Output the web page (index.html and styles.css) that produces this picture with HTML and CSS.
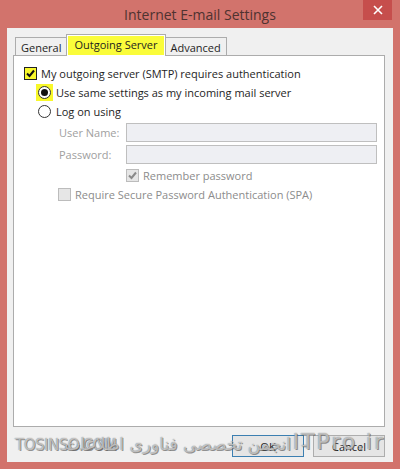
FILE: index.html
```html
<!DOCTYPE html>
<html lang="en">
<head>
  <meta charset="UTF-8">
  <title>Internet E-mail Settings</title>
  <link rel="stylesheet" href="styles.css">
</head>
<body>
  <div class="window">
    <div class="titlebar">
      <span class="title">Internet E-mail Settings</span>
      <button class="close" aria-label="Close">
        <svg width="10" height="10" viewBox="0 0 10 10"><path d="M1 1L9 9M9 1L1 9" stroke="#fff" stroke-width="1.6"/></svg>
      </button>
    </div>

    <div class="client">
      <div class="tabs">
        <div class="tab">General</div>
        <div class="tab active"><span class="mark">Outgoing Server</span></div>
        <div class="tab">Advanced</div>
      </div>

      <div class="panel">
        <div class="row">
          <span class="check marked">
            <svg width="11" height="11" viewBox="0 0 11 11"><path d="M2 5.5L4.5 8L9 2.5" fill="none" stroke="#111" stroke-width="2"/></svg>
          </span>
          <span>My outgoing server (SMTP) requires authentication</span>
        </div>
        <div class="row indent1">
          <span class="radio-wrap marked"><span class="radio on"></span></span>
          <span>Use same settings as my incoming mail server</span>
        </div>
        <div class="row indent1 last">
          <span class="radio-wrap"><span class="radio"></span></span>
          <span>Log on using</span>
        </div>

        <div class="field">
          <label>User Name:</label>
          <span class="input"></span>
        </div>
        <div class="field">
          <label>Password:</label>
          <span class="input"></span>
        </div>

        <div class="row disabled indent3">
          <span class="check dim">
            <svg width="11" height="11" viewBox="0 0 11 11"><path d="M2 5.5L4.5 8L9 2.5" fill="none" stroke="#8a8a8a" stroke-width="2"/></svg>
          </span>
          <span>Remember password</span>
        </div>
        <div class="row disabled indent2">
          <span class="check dim"></span>
          <span>Require Secure Password Authentication (SPA)</span>
        </div>
      </div>

      <div class="footer">
        <button class="btn default">OK</button>
        <button class="btn">Cancel</button>
      </div>

      <div class="watermark">
        <span class="wm-latin">TOSINSO.COM</span>
        <span class="wm-fa" dir="rtl">انجمن تخصصی فناوری اطلاعات</span>
        <span class="wm-dash">-</span>
        <span class="wm-site">ITPro.ir</span>
      </div>
    </div>
  </div>
</body>
</html>
```

FILE: styles.css
```css
html, body {
  margin: 0;
  padding: 0;
}
body {
  width: 400px;
  height: 469px;
  background-color: #d2736c;
  font-family: 'Open Sans', 'Noto Sans', sans-serif;
  font-size: 11px;
  color: #1e1e1e;
  overflow: hidden;
}
.window {
  height: 469px;
  padding: 0 7px 7px 7px;
  box-sizing: border-box;
  display: flex;
  flex-direction: column;
}
.titlebar {
  height: 28px;
  position: relative;
  display: flex;
  align-items: center;
  justify-content: center;
}
.title {
  font-size: 14px;
  color: #4e3230;
  margin-top: 1px;
}
.close {
  position: absolute;
  right: 1px;
  top: 0;
  width: 29px;
  height: 20px;
  border: 0;
  padding: 0;
  background-color: #c64e4c;
  display: flex;
  align-items: center;
  justify-content: center;
}
.client {
  flex: 1;
  background-color: #f0f0f0;
  position: relative;
  padding: 6px 8px 0 6px;
  display: flex;
  flex-direction: column;
}

/* tabs */
.tabs {
  display: flex;
  align-items: flex-end;
  height: 21px;
  padding-left: 2px;
  position: relative;
  z-index: 1;
}
.tab {
  height: 17px;
  padding: 0 5px;
  border: 1px solid #acacac;
  border-bottom: 0;
  background-color: #f0f0f0;
  line-height: 19px;
}
.tab + .tab {
  margin-left: -1px;
}
.tab.active {
  height: 21px;
  background-color: #fff;
  padding: 0 1px;
  margin-bottom: -1px;
}
.tab.active .mark {
  display: block;
  height: 19px;
  margin-top: 1px;
  padding: 0 6px;
  background-color: #fafc3a;
  line-height: 17px;
}

/* panel */
.panel {
  height: 372px;
  border: 1px solid #acacac;
  background-color: #fff;
  padding: 8px 0 0 10px;
  box-sizing: border-box;
}
.row {
  display: flex;
  align-items: center;
  height: 18px;
  gap: 4px;
  margin-bottom: 1px;
}
.row.last {
  margin-bottom: 0;
}
.indent1 {
  padding-left: 14px;
}
.indent2 {
  padding-left: 34px;
}
.indent3 {
  padding-left: 102px;
}
.check {
  width: 11px;
  height: 11px;
  border: 1px solid #333;
  background-color: #fff;
  display: flex;
  align-items: center;
  justify-content: center;
}
.check.marked {
  background-color: #f8f82a;
  border-color: #222;
}
.check.dim {
  border-color: #bcbcbc;
  background-color: #e6e6e6;
}
.radio-wrap {
  width: 17px;
  height: 17px;
  display: flex;
  align-items: center;
  justify-content: center;
  margin-left: -2px;
  margin-right: -1px;
}
.radio-wrap.marked {
  background-color: #f8f82a;
}
.radio {
  width: 11px;
  height: 11px;
  border: 1px solid #333;
  border-radius: 50%;
  background-color: #fff;
  display: flex;
  align-items: center;
  justify-content: center;
}
.radio.on::after {
  content: "";
  width: 7px;
  height: 7px;
  border-radius: 50%;
  background-color: #111;
}
.field {
  display: flex;
  align-items: center;
  height: 19px;
  margin-top: 3px;
  padding-left: 35px;
}
.field label {
  width: 67px;
  color: #a0a0a0;
}
.field .input {
  width: 249px;
  height: 17px;
  border: 1px solid #bfbfbf;
  background-color: #eeeff3;
}
.field + .row {
  margin-top: 2px;
}
.disabled {
  color: #8c8c8c;
}

/* footer */
.footer {
  display: flex;
  justify-content: flex-end;
  gap: 9px;
  margin-top: 8px;
}
.btn {
  width: 72px;
  height: 22px;
  border: 1px solid #adadad;
  background-color: #e5e5e5;
  font-family: inherit;
  font-size: 11px;
  color: #1e1e1e;
  padding: 0;
}
.btn.default {
  border-color: #3c7fb1;
}

/* site watermark over the dialog */
.watermark {
  position: absolute;
  left: 8px;
  bottom: 8px;
  width: 370px;
  height: 26px;
  font-family: 'DejaVu Sans', sans-serif;
  color: rgba(255, 255, 255, 0.55);
  text-shadow: 0 0 1px #666, 1px 1px 0 rgba(90, 90, 90, 0.6);
  pointer-events: none;
}
.watermark span {
  position: absolute;
  bottom: 0;
  white-space: nowrap;
}
.wm-latin {
  left: 0;
  font-size: 15px;
  letter-spacing: -0.5px;
}
.wm-fa {
  right: 94px;
  font-size: 17px;
  bottom: 2px;
}
.wm-dash {
  left: 286px;
  font-size: 18px;
}
.wm-site {
  right: 0;
  font-size: 22px;
  letter-spacing: 2px;
}
```
